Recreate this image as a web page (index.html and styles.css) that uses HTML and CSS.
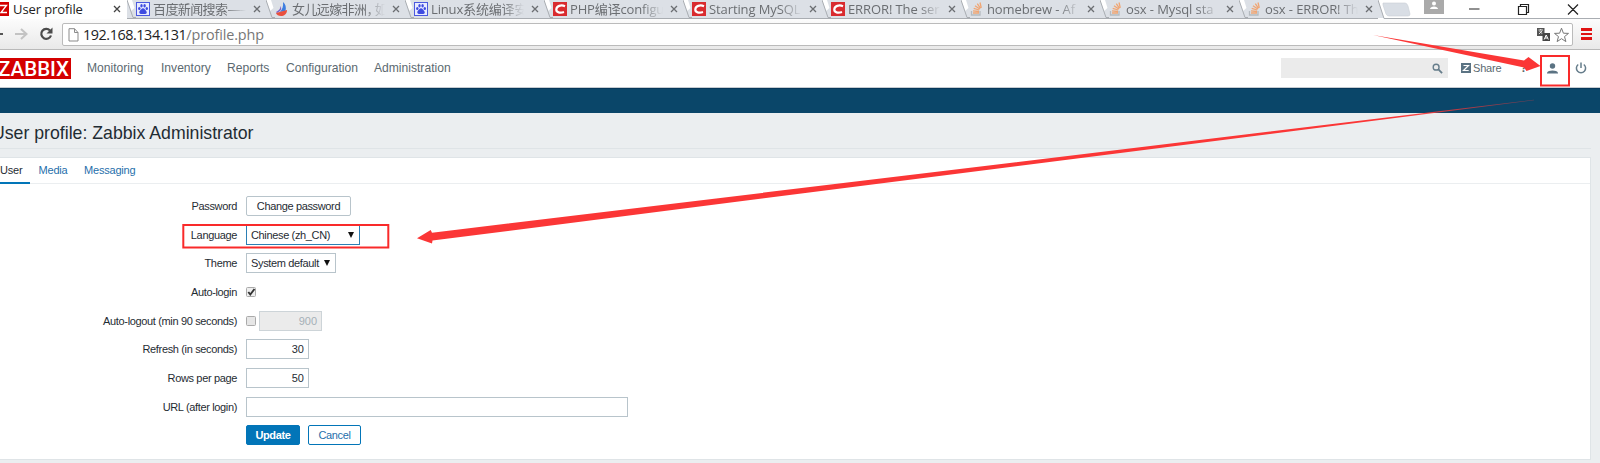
FILE: index.html
```html
<!DOCTYPE html>
<html lang="en">
<head>
<meta charset="utf-8">
<title>User profile</title>
<link rel="stylesheet" href="styles.css">
</head>
<body>
<svg class="defs" width="0" height="0">
  <symbol id="edge" viewBox="0 0 9 18"><path d="M0 0H5L7.500 8 4 11Z" fill="#fff"/><path d="M0 0 6 17.500H9" fill="none" stroke="#a9adb2"/></symbol>
  <symbol id="close" viewBox="0 0 8 8"><path d="M1 1 7 7M7 1 1 7" stroke="currentColor" stroke-width="1.300"/></symbol>
  <symbol id="paw" viewBox="0 0 14 14"><rect x=".5" y=".5" width="13" height="13" fill="#e8ebff" stroke="#4b59df"/><g fill="#3f4be0"><ellipse cx="3.300" cy="6.500" rx="1.200" ry="1.600"/><ellipse cx="5.500" cy="3.800" rx="1.200" ry="1.700"/><ellipse cx="8.600" cy="3.800" rx="1.200" ry="1.700"/><ellipse cx="10.800" cy="6.500" rx="1.200" ry="1.600"/><path d="M7 6.300C5.500 6.300 5 8 3.700 9 2.700 10 3.500 12 5 12H9C10.800 12 11.300 10 10.200 9 9 8 8.600 6.300 7 6.300Z"/></g></symbol>
  <symbol id="csdn" viewBox="0 0 14 14"><path d="M0 0H14V14H0Z" fill="#d92b2f"/><path d="M12 4.200C8 2.500 3.500 4 3.300 7.500 3.200 10.500 7 11.300 11 10" fill="none" stroke="#fff" stroke-width="2.200"/></symbol>
  <symbol id="stack" viewBox="0 0 14 14"><path d="M1.500 9V13H10V9" fill="none" stroke="#b4bac0" stroke-width="1.300"/><path d="M3 11H9M3 8.800 9 9.500M3.700 6.300 9.300 8M5 3.700 9.800 7M7.300 1.700 10.500 6.300M10 .5 11.300 5.800" stroke="#f0a573" stroke-width="1.300"/></symbol>
</svg>

<div class="tabstrip">
  <div class="tab tab-active"><svg class="zfav" viewBox="0 0 9 14"><path d="M0 0H9V14H0Z" fill="#d40000"/><path d="M0 3.500H6.500L1 10.500H7" fill="none" stroke="#fff" stroke-width="1.300"/></svg><span class="label">User profile</span><svg class="x"><use href="#close"/></svg></div>
  <div class="tab"><svg class="edge"><use href="#edge"/></svg><svg class="fav"><use href="#paw"/></svg><span class="label fade cjk">百度新闻搜索—–</span><svg class="x"><use href="#close"/></svg></div>
  <div class="tab"><svg class="edge"><use href="#edge"/></svg><svg class="fav" viewBox="0 0 14 14"><path d="M8 0C10.500 2 11.500 5 10.500 9L5 10C7.500 7 8.500 4 8 0Z" fill="#3d7de0"/><path d="M5.500 4C7 7 6 9 2 11L1 10C4 8 5.500 7 5.500 4Z" fill="#7a63c9"/><path d="M1 11 12 8C12 12 9 14 6 14 3.500 14 1.500 13 1 11Z" fill="#e9503e"/></svg><span class="label fade cjk">女儿远嫁非洲<span class="comma">，</span>如</span><svg class="x"><use href="#close"/></svg></div>
  <div class="tab"><svg class="edge"><use href="#edge"/></svg><svg class="fav"><use href="#paw"/></svg><span class="label fade mix">Linux系统编译安</span><svg class="x"><use href="#close"/></svg></div>
  <div class="tab"><svg class="edge"><use href="#edge"/></svg><svg class="fav"><use href="#csdn"/></svg><span class="label fade mix">PHP编译configu</span><svg class="x"><use href="#close"/></svg></div>
  <div class="tab"><svg class="edge"><use href="#edge"/></svg><svg class="fav"><use href="#csdn"/></svg><span class="label fade">Starting MySQL</span><svg class="x"><use href="#close"/></svg></div>
  <div class="tab"><svg class="edge"><use href="#edge"/></svg><svg class="fav"><use href="#csdn"/></svg><span class="label fade">ERROR! The ser</span><svg class="x"><use href="#close"/></svg></div>
  <div class="tab"><svg class="edge"><use href="#edge"/></svg><svg class="fav"><use href="#stack"/></svg><span class="label fade">homebrew - Af</span><svg class="x"><use href="#close"/></svg></div>
  <div class="tab"><svg class="edge"><use href="#edge"/></svg><svg class="fav"><use href="#stack"/></svg><span class="label fade">osx - Mysql sta</span><svg class="x"><use href="#close"/></svg></div>
  <div class="tab"><svg class="edge"><use href="#edge"/></svg><svg class="fav"><use href="#stack"/></svg><span class="label fade">osx - ERROR! Th</span><svg class="x"><use href="#close"/></svg></div>
  <svg class="strip-end" viewBox="0 0 222 19"><path d="M0 0 6 18H0Z" fill="#dce0e6"/><path d="M0 0 6 18.500H222" fill="none" stroke="#a9adb2"/><path d="M5 3H27Q29 3 30 6L32 14Q32 16 30 16H11Q9 16 8 14L5 5Z" fill="#d9dee5" stroke="#c9ced5" stroke-width=".6"/><path d="M46 0H66V14H46Z" fill="#aaa"/><circle cx="56" cy="3.500" r="2" fill="#fff"/><path d="M52 9C52 5.500 60 5.500 60 9Z" fill="#fff"/><path d="M91 9H101.500M140.500 6.500H148.500V14.500H140.500ZM142.500 6V4.500H150.500V12.500H149M190 4.500 200 14.500M200 4.500 190 14.500" fill="none" stroke="#222" stroke-width="1.200"/></svg>
</div>

<div class="toolbar">
  <svg class="navicons" viewBox="0 0 62 30"><path d="M0 15H3" stroke="#555" stroke-width="2"/><path d="M15 15H26M21 10 26.500 15 21 20" fill="none" stroke="#c3c3c3" stroke-width="2"/><path d="M50 11.500A5 5 0 1 0 51 16.500" fill="none" stroke="#4c4c4c" stroke-width="2.200"/><path d="M52.500 8.500V14.500H46.500Z" fill="#4c4c4c"/></svg>
  <div class="omnibox">
    <svg class="page" viewBox="0 0 11 14"><path d="M1 .7H6.500L10 4.500V13H1ZM6.500 .7V4.500H10" fill="#fff" stroke="#8b8b8b"/></svg>
    <span class="url"><b>192.168.134.131</b>/profile.php</span>
    <svg class="boxicons" viewBox="0 0 34 16"><rect x="1" y="1" width="7.500" height="8" fill="#555"/><path d="M2.500 3H7M4.700 2V3M3 7 6 4M3.500 4 6.500 7" stroke="#fff" stroke-width=".8"/><rect x="6.500" y="6" width="7.500" height="8" fill="#444"/><path d="M8.200 12.500 10.200 8 12.300 12.500M9 11H11.500" fill="none" stroke="#fff"/><path d="M25.500 1.200 27.400 6.200 32.500 6.400 28.500 9.600 29.900 14.600 25.500 11.700 21.100 14.600 22.500 9.600 18.500 6.400 23.600 6.200Z" fill="#fff" stroke="#777"/></svg>
  </div>
  <div class="burger"><i></i><i></i><i></i></div>
</div>

<header class="header">
  <div class="logo"><span>ZABBIX</span></div>
  <nav class="nav"><a class="n1">Monitoring</a><a class="n2">Inventory</a><a class="n3">Reports</a><a class="n4">Configuration</a><a class="n5">Administration</a></nav>
  <div class="search"><svg viewBox="0 0 12 12"><circle cx="4.500" cy="4.500" r="3.200" fill="none" stroke="#667d8b" stroke-width="1.500"/><path d="M7 7 11 11" stroke="#667d8b" stroke-width="2"/></svg></div>
  <a class="share"><svg viewBox="0 0 10 10"><path d="M0 0H10V10H0Z" fill="#5b7383"/><path d="M2.500 2.500H7.500L2.500 7.500H7.700" fill="none" stroke="#fff" stroke-width="1.200"/></svg>Share</a>
  <a class="help">?</a>
  <svg class="person" viewBox="0 0 11 11"><circle cx="5.500" cy="3" r="2.700" fill="#5b7383"/><path d="M0 10.500V9.500C1 6.800 10 6.800 11 9.500V10.500Z" fill="#5b7383"/></svg>
  <svg class="power" viewBox="0 0 12 12"><path d="M3.200 2.500A4.600 4.600 0 1 0 8.800 2.500M6 .5V6" fill="none" stroke="#667d8b" stroke-width="1.500"/></svg>
</header>
<div class="subnav"></div>

<main class="main">
  <h1 class="title"><span>User profile: Zabbix Administrator</span></h1>
  <section class="card">
    <div class="tabs"><a class="current">User</a><a class="t2">Media</a><a class="t3">Messaging</a></div>
    <form class="form">
      <label>Password</label><div><button type="button" class="btn change">Change password</button></div>
      <label>Language</label><div><span class="select lang">Chinese (zh_CN)<i></i></span></div>
      <label>Theme</label><div><span class="select theme">System default<i></i></span></div>
      <label>Auto-login</label><div><svg class="check" viewBox="0 0 10 10"><rect x=".5" y=".5" width="9" height="9" rx="1" fill="#eee" stroke="#aaa"/><path d="M2.300 5 4.300 7.500 8.500 2" fill="none" stroke="#333" stroke-width="1.900"/></svg></div>
      <label>Auto-logout (min 90 seconds)</label><div><svg class="check" viewBox="0 0 10 10"><rect x=".5" y=".5" width="9" height="9" rx="1" fill="#e6e6e6" stroke="#aaa"/></svg><span class="field off">900</span></div>
      <label>Refresh (in seconds)</label><div><span class="field">30</span></div>
      <label>Rows per page</label><div><span class="field">50</span></div>
      <label>URL (after login)</label><div><span class="field url-field"></span></div>
      <label></label><div><button type="button" class="btn update">Update</button><button type="button" class="btn cancel">Cancel</button></div>
    </form>
  </section>
</main>

<svg class="annotations" viewBox="0 0 1600 463">
  <defs><linearGradient id="tail" gradientUnits="userSpaceOnUse" x1="1400" y1="0" x2="1534" y2="0"><stop offset="0" stop-color="#fb3636"/><stop offset="1" stop-color="#fb3636" stop-opacity=".4"/></linearGradient></defs>
  <g fill="none" stroke="#f92a2a" stroke-width="2"><rect x="183.300" y="225" width="205" height="22.500"/><rect x="1541" y="56" width="28" height="29.500"/></g>
  <path d="M1373 35 1524 60.500 1528.500 57 1540.500 66 1526.500 71 1524 67.500Z" fill="#fb3636"/>
  <path d="M1534 99.700V100.300L432.500 240.500 432 243.500 417 238.300 430.700 230 432 232.700Z" fill="url(#tail)"/>
</svg>
</body>
</html>
```
FILE: styles.css
```css
* { box-sizing: border-box; }
body { margin: 0; width: 1600px; height: 463px; overflow: hidden; position: relative; background: #ebeef0; font-family: "Liberation Sans", Arial, sans-serif; font-size: 11px; color: #1f2c33; }
svg { display: block; flex: none; }
.defs { position: absolute; }

.tabstrip { display: flex; height: 19px; background: #fff; font-family: "Open Sans", "Noto Sans CJK SC", sans-serif; font-size: 13px; color: #6b6e72; }
.tab { flex: none; display: flex; width: 139px; height: 19px; background: #dce0e6; border-bottom: 1px solid #a9adb2; }
.tab-active { width: 127px; background: #fff; border-bottom: 0; color: #222; }
.edge { width: 9px; height: 18px; }
.zfav { width: 9px; height: 14px; margin-top: 2px; }
.fav { width: 14px; height: 14px; margin: 2px 3px 0 0; }
.label { width: 95px; height: 18px; line-height: 18px; white-space: nowrap; letter-spacing: -0.1px; }
.tab-active .label { margin-left: 4px; width: 100px; }
.cjk { letter-spacing: -0.6px; }
.comma { margin-right: -4px; }
.mix { letter-spacing: -0.15px; }
.fade { -webkit-mask-image: linear-gradient(90deg, #000 75%, transparent 98%); mask-image: linear-gradient(90deg, #000 75%, transparent 98%); }
.x { width: 8px; height: 8px; margin: 5px 0 0; }
.tab .x { margin-left: 5px; }
.tab-active .x { margin-left: 0; color: #444; }
.strip-end { width: 222px; height: 19px; }

.toolbar { display: flex; height: 31px; background: linear-gradient(#fcfcfc, #e9e9e9); border-bottom: 1px solid #b9b9b9; }
.navicons { width: 62px; height: 30px; }
.omnibox { width: 1511px; height: 23px; margin-top: 4px; display: flex; align-items: center; background: #fff; border: 1px solid #bbb; border-radius: 2px; }
.page { width: 11px; height: 14px; margin-left: 5px; }
.url { flex: 1; margin-left: 4px; font: 14.4px/20px "Open Sans", sans-serif; letter-spacing: -0.12px; color: #777; }
.url b { font-weight: 400; letter-spacing: -0.45px; color: #222; }
.boxicons { width: 34px; height: 16px; margin-right: 2px; }
.burger { display: grid; gap: 2px; align-content: start; margin: 9px 0 0 8px; width: 11px; }
.burger i { height: 2.500px; background: #e01212; }

.header { display: flex; align-items: center; height: 38px; background: #fff; padding-bottom: 1px; border-bottom: 1px solid #c5ccd1; color: #5b6970; font-size: 12.100px; }
.logo { width: 71px; height: 21px; margin-top: 1px; background: #d40000; color: #fff; overflow: hidden; display: flex; justify-content: flex-end; padding-right: 2px; font: 500 20.500px/22px Roboto, sans-serif; }
.nav { display: flex; width: 1210px; }
.nav a { flex: none; white-space: nowrap; }
.n1 { margin-left: 16px; width: 74px; }
.n2 { width: 66px; }
.n3 { width: 59px; }
.n4 { width: 88px; }
.search { width: 167px; height: 20px; background: #ebebeb; display: flex; align-items: center; justify-content: flex-end; padding-right: 5px; }
.search svg { width: 11px; height: 11px; }
.share { display: flex; align-items: center; gap: 2px; width: 59px; margin-left: 13px; font-size: 11px; letter-spacing: -0.2px; }
.share svg { width: 10px; height: 10px; }
.help { width: 27px; padding-left: 0; font-size: 12px; font-weight: 700; }
.person { width: 11px; height: 11px; }
.power { width: 12px; height: 12px; margin-left: 17px; }
.subnav { height: 25px; background: #0a4669; border-top: 1px solid #06375a; }

.title { margin: 0 9px 0 0; height: 36px; border-bottom: 1px solid #dfe4e7; font-size: 17.700px; line-height: 40px; font-weight: 400; overflow: hidden; }
.title span { margin-left: -8px; }
.card { margin: 8px 9px 0 0; height: 303px; background: #fff; border: 1px solid #dfe4e7; border-left: 0; }
.tabs { display: flex; height: 26px; border-bottom: 1px solid #ebeef0; line-height: 24px; color: #1f6fab; }
.tabs a { letter-spacing: -0.2px; }
.current { width: 30px; height: 26px; color: #1f2c33; border-bottom: 2px solid #0275b8; }
.t2 { margin-left: 8.500px; width: 45.500px; }
.form { display: grid; grid-template-columns: 237px 1fr; column-gap: 9px; grid-auto-rows: 28.700px; align-items: center; margin-top: 7.500px; letter-spacing: -0.35px; }
.form label { text-align: right; }
.form div { display: flex; align-items: center; }
.btn { height: 20px; padding: 0; font: inherit; letter-spacing: inherit; border: 1px solid #b8c4cb; border-radius: 2px; background: #fff; color: #1f2c33; }
.change { width: 105px; }
.update { width: 54px; background: #0275b8; border-color: #0275b8; color: #fff; font-weight: 700; }
.cancel { width: 53px; margin-left: 8px; border-color: #0275b8; color: #1f6fab; }
.select { display: flex; align-items: center; justify-content: space-between; height: 20px; padding: 0 5px 0 4px; border: 1px solid #b8c4cb; }
.select i { border: 3px solid transparent; border-top: 6px solid #111; border-bottom: 0; }
.lang { width: 114px; border-color: #2b7fb5; }
.theme { width: 90px; }
.check { width: 10px; height: 10px; }
.field { width: 63px; height: 20px; border: 1px solid #b8c4cb; text-align: right; line-height: 18px; padding-right: 4px; letter-spacing: 0; }
.off { margin-left: 3px; background: #ebebeb; border-color: #cdd4d8; color: #a5b0b7; }
.url-field { width: 382px; }

.annotations { position: absolute; inset: 0; width: 1600px; height: 463px; pointer-events: none; }
```
